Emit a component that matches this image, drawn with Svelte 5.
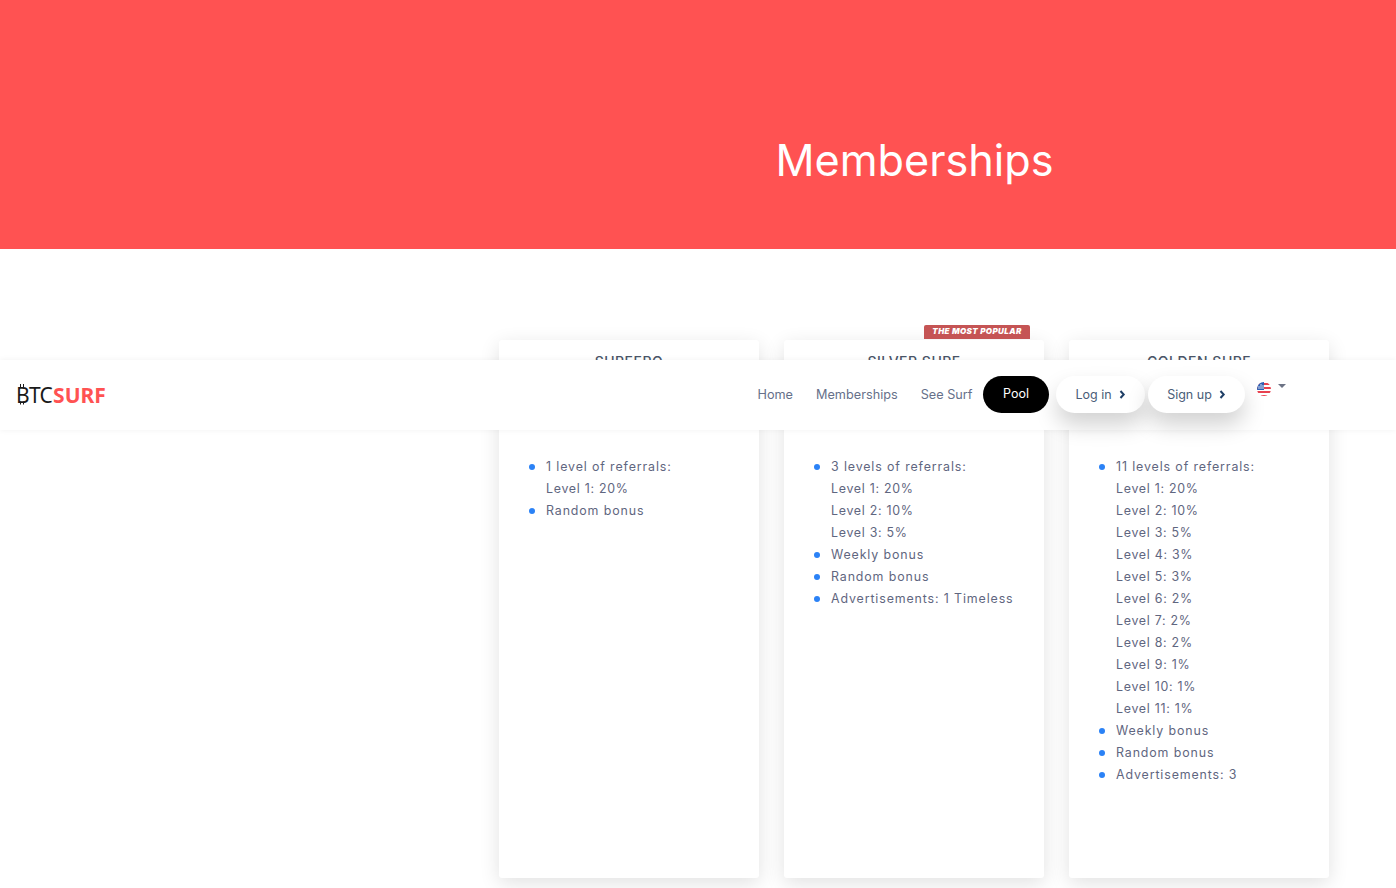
<script>
  const links = ['Home', 'Memberships', 'See Surf'];

  const plans = [
    {
      name: 'SUPEERO',
      items: [
        { text: '1 level of referrals:', levels: ['Level 1: 20%'] },
        { text: 'Random bonus' }
      ]
    },
    {
      name: 'SILVER SURF',
      popular: true,
      items: [
        { text: '3 levels of referrals:', levels: ['Level 1: 20%', 'Level 2: 10%', 'Level 3: 5%'] },
        { text: 'Weekly bonus' },
        { text: 'Random bonus' },
        { text: 'Advertisements: 1 Timeless' }
      ]
    },
    {
      name: 'GOLDEN SURF',
      items: [
        {
          text: '11 levels of referrals:',
          levels: [
            'Level 1: 20%', 'Level 2: 10%', 'Level 3: 5%', 'Level 4: 3%', 'Level 5: 3%', 'Level 6: 2%',
            'Level 7: 2%', 'Level 8: 2%', 'Level 9: 1%', 'Level 10: 1%', 'Level 11: 1%'
          ]
        },
        { text: 'Weekly bonus' },
        { text: 'Random bonus' },
        { text: 'Advertisements: 3' }
      ]
    }
  ];
</script>

<div class="page">
  <section class="hero">
    <h1>Memberships</h1>
  </section>

  <section class="plans">
    {#each plans as plan}
      <article class="card">
        {#if plan.popular}
          <span class="ribbon">THE MOST POPULAR</span>
        {/if}
        <h2>{plan.name}</h2>
        <ul>
          {#each plan.items as item}
            <li>
              {item.text}
              {#if item.levels}
                {#each item.levels as level}
                  <div>{level}</div>
                {/each}
              {/if}
            </li>
          {/each}
        </ul>
      </article>
    {/each}
  </section>

  <header class="navbar">
    <div class="logo"><span class="btc"><span class="b">B</span>TC</span><span class="surf">SURF</span></div>
    <nav>
      {#each links as link}
        <a href="#top" class="link">{link}</a>
      {/each}
      <a href="#top" class="pool">Pool</a>
      <a href="#top" class="pill">Log in
        <svg width="7" height="9" viewBox="0 0 7 9"><path d="M1.5 1l3.2 3.5-3.2 3.5" fill="none" stroke="#1f3f66" stroke-width="2"/></svg>
      </a>
      <a href="#top" class="pill">Sign up
        <svg width="7" height="9" viewBox="0 0 7 9"><path d="M1.5 1l3.2 3.5-3.2 3.5" fill="none" stroke="#1f3f66" stroke-width="2"/></svg>
      </a>
      <span class="lang">
        <svg width="14" height="14" viewBox="0 0 14 14">
          <defs><clipPath id="round"><circle cx="7" cy="7" r="7"/></clipPath></defs>
          <g clip-path="url(#round)">
            <rect width="14" height="14" fill="#fff"/>
            <rect y="1" width="14" height="2" fill="#e8414f"/>
            <rect y="5" width="14" height="2" fill="#e8414f"/>
            <rect y="9" width="14" height="2" fill="#e8414f"/>
            <rect y="13" width="14" height="1" fill="#e8414f"/>
            <rect y="0" width="7" height="8" fill="#2f5fb3"/>
            <path d="M2 7V4M4 7V2M6 7V3" stroke="#fff" stroke-width="0.8"/>
          </g>
        </svg>
        <i class="caret"></i>
      </span>
    </nav>
  </header>
</div>

<style>
  :global(body) {
    margin: 0;
    background: #fff;
    overflow: hidden;
    font-family: Inter, "Liberation Sans", sans-serif;
  }

  .page {
    position: relative;
    height: 888px;
    overflow: hidden;
  }

  .hero {
    height: 249px;
    background: #ff5252;
    display: flex;
    align-items: center;
    justify-content: center;
    padding-left: 433px;
    box-sizing: border-box;
  }

  .hero h1 {
    margin: 73px 0 0;
    font-size: 43.2px;
    font-weight: 400;
    color: #fff;
    line-height: 1;
  }

  .plans {
    display: flex;
    gap: 25px;
    padding: 91px 0 0 499px;
  }

  .card {
    position: relative;
    width: 260px;
    height: 538px;
    box-sizing: border-box;
    background: #fff;
    border-radius: 3px;
    box-shadow: 0 5px 20px rgba(0, 0, 0, 0.12);
    padding: 13px 30px 0;
  }

  .ribbon {
    position: absolute;
    top: -15px;
    left: 140px;
    width: 106px;
    height: 14px;
    border-radius: 2px 2px 0 0;
    background: #c55454;
    color: #fff;
    font-size: 8px;
    font-weight: 900;
    font-style: italic;
    letter-spacing: 0.4px;
    line-height: 13px;
    text-align: center;
  }

  h2 {
    margin: 0;
    text-align: center;
    font-size: 14px;
    font-weight: 500;
    letter-spacing: 0.5px;
    color: #4a5568;
  }

  ul {
    list-style: none;
    margin: 86px 0 0;
    padding: 0 0 0 17px;
  }

  li {
    position: relative;
    font-size: 12.4px;
    line-height: 22px;
    letter-spacing: 0.88px;
    color: #5f6680;
    white-space: nowrap;
  }

  li div {
    letter-spacing: 0.72px;
  }

  li::before {
    content: '';
    position: absolute;
    left: -17px;
    top: 7.5px;
    width: 6px;
    height: 6px;
    border-radius: 50%;
    background: #2b82f6;
  }

  .navbar {
    position: absolute;
    top: 360px;
    left: 0;
    right: 0;
    height: 70px;
    background: #fff;
    box-shadow: 0 0 6px rgba(0, 0, 0, 0.06);
    display: flex;
    align-items: center;
    justify-content: space-between;
    padding: 0 110px 0 16px;
  }

  .logo {
    font-family: "Noto Sans", sans-serif;
    font-size: 21px;
    line-height: 1;
  }

  .btc {
    color: #1a1a1a;
    letter-spacing: -0.7px;
  }

  .b {
    position: relative;
  }

  .b::before {
    content: '';
    position: absolute;
    left: 4px;
    top: 3px;
    width: 4px;
    height: 21px;
    border-left: 1px solid #1a1a1a;
    border-right: 1px solid #1a1a1a;
    box-sizing: border-box;
    clip-path: polygon(0 0, 100% 0, 100% 4px, 0 4px, 0 18px, 100% 18px, 100% 100%, 0 100%);
  }

  .surf {
    color: #ff5252;
    font-weight: 700;
    margin-left: 1px;
  }

  nav {
    display: flex;
    align-items: center;
    margin-top: -2px;
  }

  nav a {
    color: #66708a;
    text-decoration: none;
  }

  nav a.link {
    font-size: 12.7px;
    margin-right: 23px;
  }

  nav a.pool {
    width: 66px;
    height: 37px;
    margin: 0 7px 0 -12.5px;
    padding-bottom: 1px;
    box-sizing: border-box;
    border-radius: 19px;
    background: #000;
    color: #fff;
    font-size: 12.5px;
    display: flex;
    align-items: center;
    justify-content: center;
  }

  nav a.pill {
    height: 37px;
    width: 89px;
    margin-right: 3px;
    border-radius: 19px;
    background: #fff;
    color: #4a5d78;
    font-size: 12.5px;
    box-shadow: 0 12px 22px rgba(0, 0, 0, 0.18);
    display: flex;
    align-items: center;
    justify-content: center;
    gap: 7px;
  }

  nav a.pill:last-of-type {
    width: 97px;
  }

  .lang {
    display: flex;
    align-items: center;
    gap: 7px;
    margin: -10px 0 0 9px;
  }

  .caret {
    width: 0;
    height: 0;
    border: 4px solid transparent;
    border-top: 4px solid #6c7385;
    border-bottom: 0;
    margin-top: -6px;
  }
</style>
